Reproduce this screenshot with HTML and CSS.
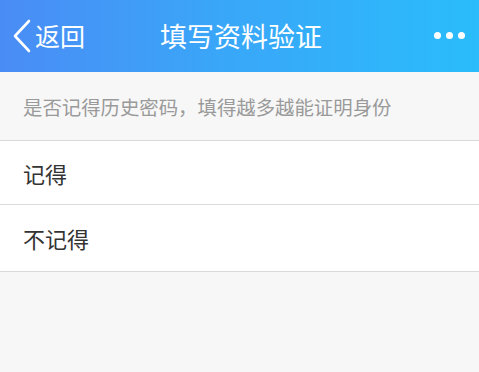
FILE: index.html
```html
<!DOCTYPE html>
<html lang="zh-CN">
<head>
<meta charset="utf-8">
<link rel="stylesheet" href="styles.css">
</head>
<body>
<header class="nav">
  <div class="back">
    <svg class="chev" width="20" height="34" viewBox="0 0 20 34"><path d="M17 2 L3 17 L17 32" fill="none" stroke="#fff" stroke-width="2.6" stroke-linecap="round" stroke-linejoin="round"/></svg>
    <span class="back-text">返回</span>
  </div>
  <div class="title">填写资料验证</div>
  <div class="more"><i></i><i></i><i></i></div>
</header>
<div class="hint">是否记得历史密码，填得越多越能证明身份</div>
<ul class="list">
  <li class="item item-first">记得</li>
  <li class="item item-second">不记得</li>
</ul>
</body>
</html>
```
FILE: styles.css
```css
* { box-sizing: border-box; }
html, body {
  margin: 0;
  padding: 0;
  background: #f7f7f7;
  font-family: "Noto Sans CJK SC", "Noto Sans", sans-serif;
}
.nav {
  height: 72px;
  background: linear-gradient(90deg, #4a8cf5 0%, #3aa6f8 45%, #2abcfb 100%);
  display: flex;
  align-items: center;
  position: relative;
  color: #fff;
}
.back {
  display: flex;
  align-items: center;
  padding-left: 12px;
  height: 100%;
}
.chev { display: block; }
.back-text {
  font-size: 25px;
  margin-left: 3px;
  line-height: 1;
  margin-top: -1px;
}
.title {
  position: absolute;
  left: 0;
  right: 0;
  text-align: center;
  font-size: 27px;
  line-height: 1;
  pointer-events: none;
  margin-top: -2px;
  padding-left: 3px;
}
.more {
  margin-left: auto;
  margin-right: 14px;
  display: flex;
  gap: 5px;
  margin-top: -2px;
}
.more i {
  display: block;
  width: 7px;
  height: 7px;
  border-radius: 50%;
  background: #fff;
}
.hint {
  height: 69px;
  padding-left: 23px;
  display: flex;
  align-items: center;
  font-size: 19.4px;
  color: #9a9a9a;
  border-bottom: 1px solid #d9d9d9;
}
.list {
  list-style: none;
  margin: 0;
  padding: 0;
  background: #fff;
}
.item {
  display: flex;
  align-items: center;
  padding-left: 23px;
  font-size: 22px;
  color: #333;
  border-bottom: 1px solid #d9d9d9;
}
.item-first { height: 64px; }
.item-second { height: 67px; }
```
